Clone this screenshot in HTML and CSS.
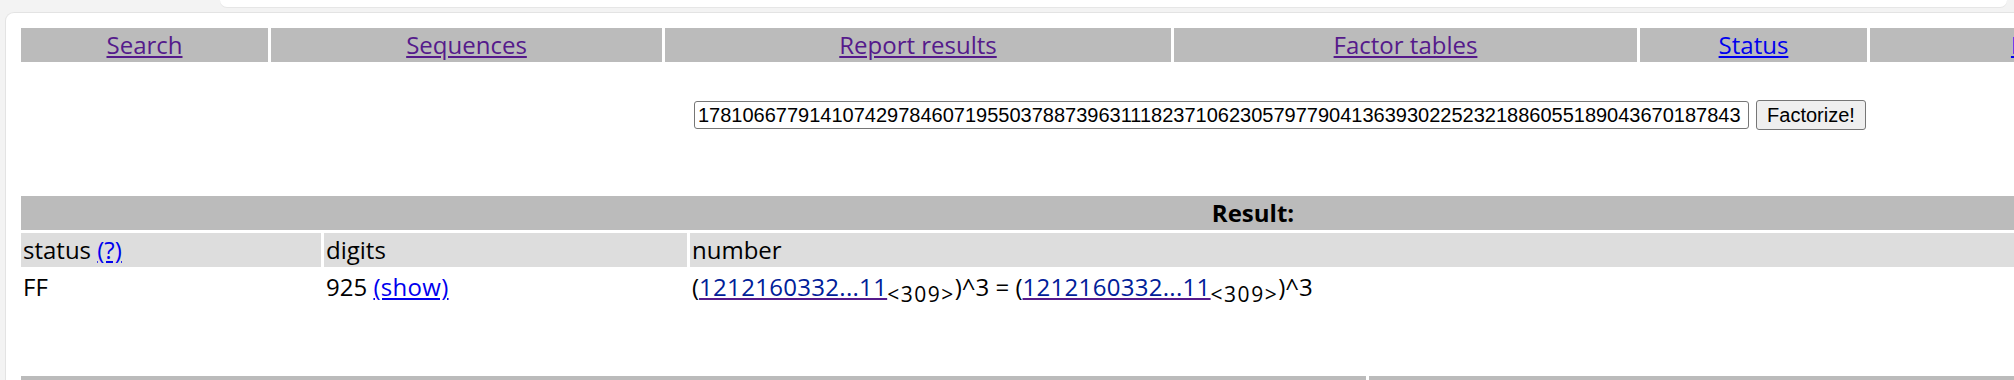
FILE: index.html
```html
<!DOCTYPE html>
<html lang="en">
<head>
  <meta charset="UTF-8">
  <title>factordb.com</title>
  <link rel="stylesheet" href="styles.css">
</head>
<body>

<div class="top-card"></div>

<div class="frame">
  <div class="page">

    <div class="menu">
      <div class="menu-cell"><a class="visited" href="#">Search</a></div>
      <div class="menu-cell"><a class="visited" href="#">Sequences</a></div>
      <div class="menu-cell"><a class="visited" href="#">Report results</a></div>
      <div class="menu-cell"><a class="visited" href="#">Factor tables</a></div>
      <div class="menu-cell"><a href="#">Status</a></div>
      <div class="menu-cell"><a href="#">Downloads</a></div>
      <div class="menu-cell"><a href="#">Login</a></div>
    </div>

    <form class="query">
      <input type="text" class="query-input" value="1781066779141074297846071955037887396311182371062305797790413639302252321886055189043670187843">
      <button type="button" class="query-btn">Factorize!</button>
    </form>

    <div class="result">
      <div class="result-title">Result:</div>
      <div class="head">status <a href="#">(?)</a></div>
      <div class="head">digits</div>
      <div class="head">number</div>
      <div class="row">FF</div>
      <div class="row">925 <a href="#">(show)</a></div>
      <div class="row">(<a class="visited" href="#"><span class="ff">1212160332...11</span></a><sub>&lt;309&gt;</sub>)^3 = (<a class="visited" href="#"><span class="ff">1212160332...11</span></a><sub>&lt;309&gt;</sub>)^3</div>
    </div>

    <div class="footer">
      <div class="footer-cell"></div>
      <div class="footer-cell"></div>
    </div>

  </div>
</div>

</body>
</html>
```

FILE: styles.css
```css
html, body {
  overflow: hidden;
}
body {
  margin: 0;
  background: #f3f3f3;
  font-family: "Open Sans", "Noto Sans", sans-serif;
  font-size: 24px;
  color: #000;
}
a {
  color: #0000ee;
}
a.visited {
  color: #551a8b;
}
.top-card {
  height: 7px;
  margin: 0 7px 0 220px;
  background: white;
  border-radius: 0 0 10px 10px;
  box-shadow: 0 1px 0 #e6e6e6;
}
.frame {
  margin: 5px 0 0 5px;
  width: 2600px;
  height: 400px;
  background: white;
  border-top: 1px solid #e3e3e3;
  border-left: 1px solid #e3e3e3;
  border-radius: 9px 0 0 0;
  padding: 12px 0 0 12px;
}
.page {
  width: 2470px;
}
.menu {
  display: grid;
  grid-template-columns: 247px 391px 506px 463px 227px 407px 1fr;
  gap: 3px;
  padding: 3px;
}
.menu-cell {
  background: #bbbbbb;
  height: 34px;
  line-height: 33px;
  text-align: center;
}
.query {
  display: flex;
  align-items: center;
  gap: 7px;
  margin: 35px 0 0 676px;
  height: 30px;
}
.query-input {
  box-sizing: border-box;
  width: 1055px;
  height: 28px;
  padding: 0 3px;
  border: 1px solid #767676;
  border-radius: 3px;
  font-family: "Liberation Sans", Arial, sans-serif;
  font-size: 20px;
  color: #000;
}
.query-btn {
  box-sizing: border-box;
  width: 110px;
  height: 30px;
  padding: 0;
  background: #efefef;
  border: 1px solid #767676;
  border-radius: 3px;
  font-family: "Liberation Sans", Arial, sans-serif;
  font-size: 20px;
  color: #000;
}
.result {
  display: grid;
  grid-template-columns: 300px 363px 1fr;
  grid-auto-rows: 34px;
  gap: 3px;
  padding: 3px;
  margin-top: 63px;
}
.result-title {
  grid-column: 1 / 4;
  background: #bbbbbb;
  text-align: center;
  font-weight: bold;
  line-height: 33px;
}
.head {
  background: #dddddd;
  padding: 0 2px;
  line-height: 34px;
}
.row {
  padding: 0 2px;
  line-height: 34px;
  white-space: nowrap;
}
.row a {
  letter-spacing: 0.3px;
}
.ff {
  color: #002099;
}
sub {
  font-size: 21px;
  letter-spacing: 1.5px;
  line-height: 0;
}
.footer {
  display: grid;
  grid-template-columns: 1345px 1fr;
  gap: 3px;
  padding: 3px;
  margin-top: 66px;
}
.footer-cell {
  background: #bbbbbb;
  height: 34px;
}
```
